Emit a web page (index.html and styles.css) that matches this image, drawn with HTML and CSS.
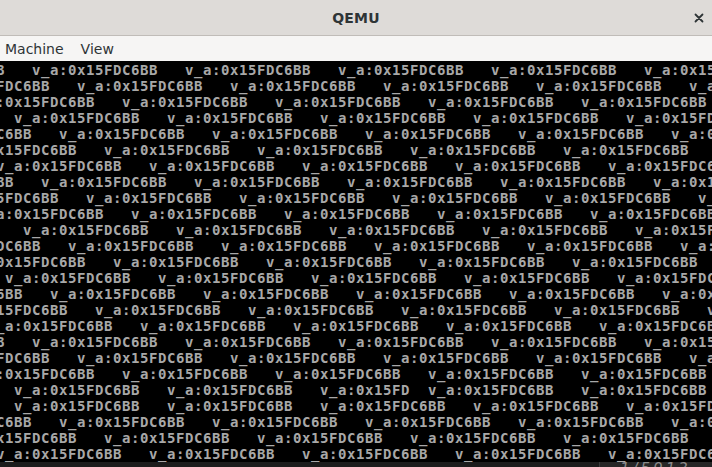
FILE: index.html
```html
<!DOCTYPE html>
<html>
<head>
<meta charset="utf-8">
<title>QEMU</title>
<link rel="stylesheet" href="styles.css">
</head>
<body>
<div class="window">
  <header class="titlebar">
    <span class="spacer"></span>
    <span class="title">QEMU</span>
    <span class="controls">
      <svg class="close" width="10" height="10" viewBox="0 0 10 10"><path d="M1.5 1.5 L8.5 8.5 M8.5 1.5 L1.5 8.5" stroke="#2e3436" stroke-width="1.8" stroke-linecap="round" fill="none"/></svg>
    </span>
  </header>
  <nav class="menubar">
    <span class="menu-item">Machine</span>
    <span class="menu-item">View</span>
  </nav>
  <main class="screen">
<pre class="console">B   v_a:0x15FDC6BB   v_a:0x15FDC6BB   v_a:0x15FDC6BB   v_a:0x15FDC6BB   v_a:0x15
FDC6BB   v_a:0x15FDC6BB   v_a:0x15FDC6BB   v_a:0x15FDC6BB   v_a:0x15FDC6BB   v_a
:0x15FDC6BB   v_a:0x15FDC6BB   v_a:0x15FDC6BB   v_a:0x15FDC6BB   v_a:0x15FDC6BB 
  v_a:0x15FDC6BB   v_a:0x15FDC6BB   v_a:0x15FDC6BB   v_a:0x15FDC6BB   v_a:0x15FD
C6BB   v_a:0x15FDC6BB   v_a:0x15FDC6BB   v_a:0x15FDC6BB   v_a:0x15FDC6BB   v_a:0
x15FDC6BB   v_a:0x15FDC6BB   v_a:0x15FDC6BB   v_a:0x15FDC6BB   v_a:0x15FDC6BB   
v_a:0x15FDC6BB   v_a:0x15FDC6BB   v_a:0x15FDC6BB   v_a:0x15FDC6BB   v_a:0x15FDC6
BB   v_a:0x15FDC6BB   v_a:0x15FDC6BB   v_a:0x15FDC6BB   v_a:0x15FDC6BB   v_a:0x1
5FDC6BB   v_a:0x15FDC6BB   v_a:0x15FDC6BB   v_a:0x15FDC6BB   v_a:0x15FDC6BB   v_
a:0x15FDC6BB   v_a:0x15FDC6BB   v_a:0x15FDC6BB   v_a:0x15FDC6BB   v_a:0x15FDC6BB
   v_a:0x15FDC6BB   v_a:0x15FDC6BB   v_a:0x15FDC6BB   v_a:0x15FDC6BB   v_a:0x15F
DC6BB   v_a:0x15FDC6BB   v_a:0x15FDC6BB   v_a:0x15FDC6BB   v_a:0x15FDC6BB   v_a:
0x15FDC6BB   v_a:0x15FDC6BB   v_a:0x15FDC6BB   v_a:0x15FDC6BB   v_a:0x15FDC6BB  
 v_a:0x15FDC6BB   v_a:0x15FDC6BB   v_a:0x15FDC6BB   v_a:0x15FDC6BB   v_a:0x15FDC
6BB   v_a:0x15FDC6BB   v_a:0x15FDC6BB   v_a:0x15FDC6BB   v_a:0x15FDC6BB   v_a:0x
15FDC6BB   v_a:0x15FDC6BB   v_a:0x15FDC6BB   v_a:0x15FDC6BB   v_a:0x15FDC6BB   v
_a:0x15FDC6BB   v_a:0x15FDC6BB   v_a:0x15FDC6BB   v_a:0x15FDC6BB   v_a:0x15FDC6B
B   v_a:0x15FDC6BB   v_a:0x15FDC6BB   v_a:0x15FDC6BB   v_a:0x15FDC6BB   v_a:0x15
FDC6BB   v_a:0x15FDC6BB   v_a:0x15FDC6BB   v_a:0x15FDC6BB   v_a:0x15FDC6BB   v_a
:0x15FDC6BB   v_a:0x15FDC6BB   v_a:0x15FDC6BB   v_a:0x15FDC6BB   v_a:0x15FDC6BB 
  v_a:0x15FDC6BB   v_a:0x15FDC6BB   v_a:0x15FD  v_a:0x15FDC6BB   v_a:0x15FDC6BB 
  v_a:0x15FDC6BB   v_a:0x15FDC6BB   v_a:0x15FDC6BB   v_a:0x15FDC6BB   v_a:0x15FD
C6BB   v_a:0x15FDC6BB   v_a:0x15FDC6BB   v_a:0x15FDC6BB   v_a:0x15FDC6BB   v_a:0
x15FDC6BB   v_a:0x15FDC6BB   v_a:0x15FDC6BB   v_a:0x15FDC6BB   v_a:0x15FDC6BB   
v_a:0x15FDC6BB   v_a:0x15FDC6BB   v_a:0x15FDC6BB   v_a:0x15FDC6BB   v_a:0x15FDC6</pre>
    <div class="bottom-bar"></div>
    <div class="status-tip">1/5913</div>
  </main>
</div>
</body>
</html>
```

FILE: styles.css
```css
html, body {
  margin: 0;
  padding: 0;
  background: #000;
}

.window {
  width: 712px;
  height: 467px;
  overflow: hidden;
  display: flex;
  flex-direction: column;
}

.titlebar {
  height: 35px;
  flex: 0 0 35px;
  background: #dedbd8;
  border-bottom: 1px solid #c0bcb8;
  display: grid;
  grid-template-columns: 1fr auto 1fr;
  align-items: center;
  font-family: "DejaVu Sans", "Noto Sans", sans-serif;
}

.title {
  font-weight: bold;
  font-size: 14px;
  color: #2e3436;
  letter-spacing: 0.2px;
}

.controls {
  display: flex;
  justify-content: flex-end;
  padding-right: 8px;
}

.close {
  display: block;
}

.menubar {
  height: 25px;
  flex: 0 0 25px;
  background: #f6f5f4;
  display: flex;
  align-items: center;
  padding-left: 5px;
  gap: 17px;
  font-family: "DejaVu Sans", "Noto Sans", sans-serif;
  font-size: 14px;
  color: #2e3436;
}

.screen {
  position: relative;
  flex: 1 1 auto;
  background: #000;
  padding-top: 1px;
  display: flex;
  flex-direction: column;
  overflow: hidden;
}

.console {
  margin: 0 0 0 -4px;
  height: 400px;
  flex: 0 0 400px;
  font-family: "DejaVu Sans Mono", "Liberation Mono", monospace;
  font-weight: bold;
  font-size: 14px;
  line-height: 16px;
  letter-spacing: 0.57px;
  color: #a8a8a8;
  white-space: pre;
  overflow: hidden;
}

.bottom-bar {
  flex: 1 1 auto;
  background: #1c1c1c;
}

.status-tip {
  position: absolute;
  left: 599px;
  right: 0;
  bottom: 0;
  height: 5px;
  overflow: hidden;
  background: #262626;
  border-left: 1px solid #3a3a3a;
  font-family: "DejaVu Sans", sans-serif;
  font-style: italic;
  font-size: 15px;
  line-height: 14px;
  color: #8a8a8a;
  padding-left: 20px;
  letter-spacing: 3px;
}
```
